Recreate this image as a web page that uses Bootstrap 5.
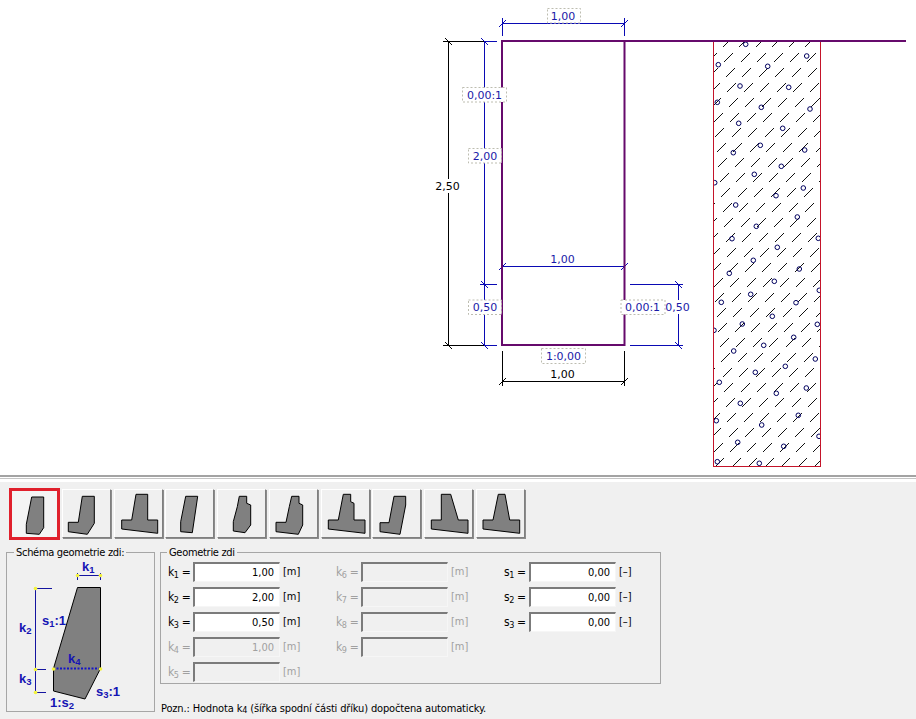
<!DOCTYPE html>
<html lang="en">
<head>
  <meta charset="UTF-8">
  <meta name="viewport" content="width=device-width, initial-scale=1.0">
  <title>Geometrie zdi</title>
  <link href="https://cdn.jsdelivr.net/npm/bootstrap@5.3.0/dist/css/bootstrap.min.css" rel="stylesheet">
  <style>
    html, body { height: 100%; }
    body { overflow: hidden; background: #f0f0f0; color: #000; font: 11px/1.2 "DejaVu Sans Condensed", "DejaVu Sans", sans-serif; }
    .draw-area { height: 475px; background: #fff; }
    .draw-area svg { display: block; font: 11px "DejaVu Sans", sans-serif; }
    .dim-blue { stroke: #0a0ab4; stroke-width: 1; fill: none; }
    .dim-black { stroke: #000; stroke-width: 1; fill: none; }
    .wall { stroke: #660a6c; stroke-width: 2; fill: none; }
    .tag { fill: #fff; stroke: #bdbdb0; stroke-width: 1; stroke-dasharray: 2 2; }
    .blank { fill: #fff; }
    .txt-blue { fill: #1a1aa8; }
    .split-bar { height: 7px; background: #fff; border-top: 2px solid #a3a3a3; }
    .split-bar::after { content: ""; display: block; height: 1px; margin-top: 1px; background: #c4c4c4; }
    .tool-strip { padding: 6px 0 0 9px; height: 64px; gap: 2.75px; }
    .shape-btn { width: 49px; height: 49px; padding: 0; margin-top: 1px; border-radius: 0; background: #f0f0f0; border: 1px solid; border-color: #fff #7f7f7f #7f7f7f #fff; box-shadow: 1px 1px 0 #8c8c8c; }
    .shape-btn svg { display: block; }
    .shape-btn.picked { width: 51px; height: 52px; margin: 0 -1px 0 0; border: 3px solid #e0202c; box-shadow: none; background: #f4f4f4; }
    .geo-box { border: 1px solid #a6a6a6; margin: 0; padding: 0; min-width: 0; }
    .geo-box legend { float: none; width: auto; font-size: 11px; line-height: 13px; letter-spacing: -.3px; margin: 0 0 0 7px; padding: 0 2px; }
    .schema-box { width: 149px; height: 166px; margin-left: 6px; }
    .schema-box svg { display: block; font: bold 13px "Liberation Sans", sans-serif; }
    .form-box { width: 501px; height: 138px; margin-left: 5px; }
    .form-box legend { margin-left: 6px; }
    .field-col { flex: 0 0 168px; gap: 5px; padding-top: 3px; }
    .field-col.first { margin-left: 7px; }
    .field-col.last { flex-basis: 150px; }
    .field-row { height: 20px; }
    .field-label { width: 25px; white-space: nowrap; font-size: 12px; letter-spacing: -.4px; }
    .field-label sub { font-size: 9px; bottom: -.2em; }
    .geo-input { width: 87px; height: 20px; padding: 0 5px 0 0; margin: 0; font: 11px "DejaVu Sans Condensed", "DejaVu Sans", sans-serif; text-align: right; color: #000; background: #fff; border-radius: 0; border: 1px solid; border-width: 2px 1px 1px 2px; border-color: #7b7b7b #f6f6f6 #f6f6f6 #7b7b7b; }
    .geo-input:disabled { background: #f0f0f0; color: #a0a0a0; opacity: 1; }
    .field-unit { margin-left: 3px; }
    .is-off { color: #a0a0a0; }
    .side-note { margin: 18px 0 0 6px; white-space: nowrap; letter-spacing: -.15px; }
    .side-note sub { font-size: 9px; bottom: -.15em; }
  </style>
</head>
<body>
  <div class="draw-area">
    <svg id="wallDrawing" width="916" height="475" viewBox="0 0 916 475">
      <defs>
        <clipPath id="soilClip"><rect x="714" y="41" width="106" height="425"/></clipPath>
      </defs>

      <!-- soil block -->
      <g id="soilHatch" clip-path="url(#soilClip)" stroke="#111" stroke-dasharray="12.7 8.5" shape-rendering="crispEdges"></g>
      <g id="soilDots" clip-path="url(#soilClip)" fill="none" stroke="#00005e"></g>
      <rect x="713.5" y="41" width="107" height="425.5" fill="none" stroke="#c4142a"/>

      <!-- black dimensions -->
      <path class="dim-black" d="M443 41.5H484M443 345.5H484M448.5 41V345M445 38l7 7M445 342l7 7"/>
      <path class="dim-black" d="M502.5 351V386M624.5 351V386M502 381.5H625M499 385l7-7M621 385l7-7"/>

      <!-- blue dimensions -->
      <path class="dim-blue" d="M484 41.5H497M484.5 41V345M480 284.5H497M484 345.5H497M481 38l7 7M481 281l7 7M481 342l7 7"/>
      <path class="dim-blue" d="M502.5 18V36M624.5 18V36M502 23.5H625M499 27l7-7M621 27l7-7"/>
      <path class="dim-blue" d="M502 266.5H625M499 270l7-7M621 270l7-7"/>
      <path class="dim-blue" d="M630 284.5H683M630 345.5H683M678.5 284V345M675 281l7 7M675 342l7 7"/>

      <!-- wall -->
      <path class="wall" d="M502 345V41H906M624.5 41V345M501 345H625.5"/>

      <!-- labels -->
      <rect class="blank" x="435" y="179" width="25" height="14"/>
      <text x="447.5" y="190" text-anchor="middle">2,50</text>
      <rect class="tag" x="547.5" y="8.5" width="33" height="14.5"/>
      <text class="txt-blue" x="563" y="20" text-anchor="middle">1,00</text>
      <rect class="tag" x="462.5" y="87.5" width="44" height="14.5"/>
      <text class="txt-blue" x="484.5" y="99" text-anchor="middle">0,00:1</text>
      <rect class="tag" x="468.5" y="148.5" width="33" height="14.5"/>
      <text class="txt-blue" x="485" y="160" text-anchor="middle">2,00</text>
      <text class="txt-blue" x="562.5" y="263" text-anchor="middle">1,00</text>
      <rect class="tag" x="468.5" y="300" width="33" height="14.5"/>
      <text class="txt-blue" x="485" y="311" text-anchor="middle">0,50</text>
      <rect class="tag" x="621" y="300" width="44" height="14.5"/>
      <text class="txt-blue" x="642.5" y="311" text-anchor="middle">0,00:1</text>
      <rect class="blank" x="666" y="300" width="24" height="14"/>
      <text class="txt-blue" x="677.5" y="311" text-anchor="middle">0,50</text>
      <rect class="tag" x="541.5" y="348.5" width="44" height="15"/>
      <text class="txt-blue" x="563.5" y="360" text-anchor="middle">1:0,00</text>
      <text x="562.5" y="377.5" text-anchor="middle">1,00</text>
    </svg>
  </div>
  <div class="split-bar"></div>

  <div class="tool-strip d-flex align-items-start" id="shapeButtons"></div>

  <div class="d-flex align-items-start">
    <fieldset class="geo-box schema-box">
      <legend>Schéma geometrie zdi:</legend>
      <svg width="147" height="152" viewBox="7 559 147 152">
        <path d="M77.5 587.5H100.5V668.5L85 699L53.5 691V668.5Z" fill="#808080" stroke="#000"/>
        <path d="M53 668.5H100" stroke="#1414c8" stroke-width="2" stroke-dasharray="2 1.5"/>
        <g stroke="#1414a0" fill="none">
          <path d="M77.5 573V580M100.5 573V580M77 575.5H101"/>
          <path d="M35.5 588V692M35 588.5H52M35 669.5H46M35 692.5H46"/>
        </g>
        <g fill="#f4f43c">
          <circle cx="77.5" cy="575.5" r="1.8"/><circle cx="100.5" cy="575.5" r="1.8"/>
          <circle cx="35.5" cy="588.5" r="1.8"/><circle cx="35.5" cy="669.5" r="1.8"/><circle cx="35.5" cy="692.5" r="1.8"/>
          <circle cx="53.5" cy="669" r="1.8"/><circle cx="100.5" cy="669" r="1.8"/>
        </g>
        <g fill="#1414b4">
          <text x="82" y="571">k<tspan font-size="9.5" dy="2">1</tspan></text>
          <text x="19" y="632">k<tspan font-size="9.5" dy="2">2</tspan></text>
          <text x="42" y="625">s<tspan font-size="9.5" dy="2">1</tspan><tspan dy="-2">:1</tspan></text>
          <text x="68" y="663">k<tspan font-size="9.5" dy="2">4</tspan></text>
          <text x="19" y="683">k<tspan font-size="9.5" dy="2">3</tspan></text>
          <text x="96" y="696">s<tspan font-size="9.5" dy="2">3</tspan><tspan dy="-2">:1</tspan></text>
          <text x="50" y="707">1:s<tspan font-size="9.5" dy="2">2</tspan></text>
        </g>
      </svg>
    </fieldset>

    <div>
      <fieldset class="geo-box form-box">
        <legend>Geometrie zdi</legend>
        <div class="d-flex">
          <div class="field-col first d-flex flex-column">
            <div class="field-row d-flex align-items-center"><span class="field-label">k<sub>1</sub> =</span><input class="geo-input form-control" value="1,00"><span class="field-unit">[m]</span></div>
            <div class="field-row d-flex align-items-center"><span class="field-label">k<sub>2</sub> =</span><input class="geo-input form-control" value="2,00"><span class="field-unit">[m]</span></div>
            <div class="field-row d-flex align-items-center"><span class="field-label">k<sub>3</sub> =</span><input class="geo-input form-control" value="0,50"><span class="field-unit">[m]</span></div>
            <div class="field-row d-flex align-items-center is-off"><span class="field-label">k<sub>4</sub> =</span><input class="geo-input form-control" value="1,00" disabled><span class="field-unit">[m]</span></div>
            <div class="field-row d-flex align-items-center is-off"><span class="field-label">k<sub>5</sub> =</span><input class="geo-input form-control" disabled><span class="field-unit">[m]</span></div>
          </div>
          <div class="field-col d-flex flex-column">
            <div class="field-row d-flex align-items-center is-off"><span class="field-label">k<sub>6</sub> =</span><input class="geo-input form-control" disabled><span class="field-unit">[m]</span></div>
            <div class="field-row d-flex align-items-center is-off"><span class="field-label">k<sub>7</sub> =</span><input class="geo-input form-control" disabled><span class="field-unit">[m]</span></div>
            <div class="field-row d-flex align-items-center is-off"><span class="field-label">k<sub>8</sub> =</span><input class="geo-input form-control" disabled><span class="field-unit">[m]</span></div>
            <div class="field-row d-flex align-items-center is-off"><span class="field-label">k<sub>9</sub> =</span><input class="geo-input form-control" disabled><span class="field-unit">[m]</span></div>
          </div>
          <div class="field-col last d-flex flex-column">
            <div class="field-row d-flex align-items-center"><span class="field-label">s<sub>1</sub> =</span><input class="geo-input form-control" value="0,00"><span class="field-unit">[–]</span></div>
            <div class="field-row d-flex align-items-center"><span class="field-label">s<sub>2</sub> =</span><input class="geo-input form-control" value="0,00"><span class="field-unit">[–]</span></div>
            <div class="field-row d-flex align-items-center"><span class="field-label">s<sub>3</sub> =</span><input class="geo-input form-control" value="0,00"><span class="field-unit">[–]</span></div>
          </div>
        </div>
      </fieldset>
      <div class="side-note">Pozn.: Hodnota k<sub>4</sub> (šířka spodní části dříku) dopočtena automaticky.</div>
    </div>
  </div>

  <script src="https://cdn.jsdelivr.net/npm/bootstrap@5.3.0/dist/js/bootstrap.bundle.min.js"></script>
  <script>
    const svgNs = 'http://www.w3.org/2000/svg';
    const hatch = document.getElementById('soilHatch');
    for (let c = 753; c < 1290; c += 16.5) {
      const l = document.createElementNS(svgNs, 'line');
      const n = Math.round(c);
      l.setAttribute('x1', n - 466.5);
      l.setAttribute('y1', 466.5);
      l.setAttribute('x2', n - 40.5);
      l.setAttribute('y2', 40.5);
      hatch.appendChild(l);
    }

    const dots = [
      [745.7,44.3],[806.7,56],[718.3,64.7],[767.7,66.3],[740,86],[788.7,87.3],[717.3,102.3],[761.3,107.3],
      [810,109],[738.7,123.3],[782.7,128.3],[760.3,145.3],[733.3,152.7],[804.7,150],[781.3,166.3],[754.3,174.3],
      [714.7,182.7],[803.3,188],[776,195.7],[735.7,205],[797.3,217],[756.3,226.3],[732,238.7],[818.3,238.3],
      [777.3,247.3],[753.3,260.3],[729.3,273.3],[799.3,269],[774.3,281.3],[819.3,290.3],[750.7,294.3],[721.3,302.3],
      [796,302.7],[772.3,316.3],[742.3,324],[817.3,324.3],[714,330.3],[793.7,337.3],[763.7,345.3],[733.7,351],
      [815.3,359],[785.3,366.3],[755.3,372.3],[719.3,382.3],[806.3,388],[776.3,393.3],[740.3,403.3],[716.3,420.7],
      [798.3,415.3],[761.7,425],[737.7,442.3],[783.7,446.3],[819,436.3],[717.3,461.7],[759.3,463.3]
    ];
    const soil = document.getElementById('soilDots');
    dots.forEach(([x, y]) => {
      const c = document.createElementNS(svgNs, 'circle');
      c.setAttribute('cx', x);
      c.setAttribute('cy', y);
      c.setAttribute('r', 2.3);
      soil.appendChild(c);
    });

    // wall section outlines, in px from the button corner
    const shapes = [
      '20.7,7 32.7,7 32.7,37.7 28.3,44.3 15.3,43.3 15.3,34.3',
      '20.3,7.3 32.3,7.3 32.3,34.3 25.3,45.3 6.3,42.7 6.3,33.3 16.3,33.3',
      '22,5.3 33.7,5.3 33.7,31 43.7,31 43.7,44.3 7.7,40 7.7,31 17.7,31',
      '20.7,7.3 32.7,7.3 27.3,43.7 15.7,42.7 15.7,32.7',
      '22.3,7.3 29.7,7.3 29.7,14.3 33.7,16 33.7,36 28,43.7 16.3,42 16.3,32.7 20.3,17.7',
      '22.7,7.3 30,7.3 30,14.3 33.7,16 33.7,36 29.3,45.3 7,42.7 7,33.3 17,33.3 20.3,17.7',
      '22.3,5.3 29.7,5.3 29.7,12.7 33,14.3 33,31 44,31 44,44.3 7.3,40 7.3,31 17.3,31',
      '22,7.3 33.7,7.3 33.7,16 28,45.3 8,42.7 8,33.7 17,33.7',
      '17.3,5.3 26.7,5.3 34.3,31 44,31 44,44.3 7.3,40 7.3,31 17.3,31',
      '22.3,5.3 29,5.3 33.7,31 43.7,31 43.7,44.3 7,40 7,31 17,31'
    ];
    const strip = document.getElementById('shapeButtons');
    shapes.forEach((points, i) => {
      const btn = document.createElement('button');
      btn.type = 'button';
      btn.className = 'btn shape-btn' + (i === 0 ? ' picked' : '');
      btn.innerHTML = `<svg width="47" height="47" viewBox="1 1 47 47"><polygon points="${points}" fill="#808080" stroke="#000"/></svg>`;
      strip.appendChild(btn);
    });
  </script>
</body>
</html>
